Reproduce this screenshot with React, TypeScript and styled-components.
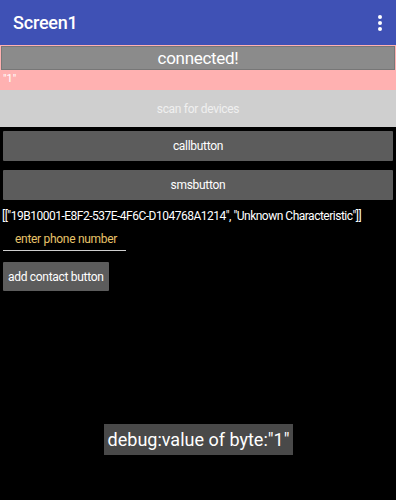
import React from 'react';
import styled, { createGlobalStyle } from 'styled-components';

const GlobalStyle = createGlobalStyle`
  html, body {
    margin: 0;
    padding: 0;
    background: #000;
  }
  body {
    font-family: Roboto, "Noto Sans", sans-serif;
  }
`;

const Screen = styled.div`
  width: 396px;
  height: 500px;
  background: #000;
  display: flex;
  flex-direction: column;
  overflow: hidden;
`;

const AppBar = styled.header`
  height: 45px;
  background: #3f51b5;
  display: flex;
  align-items: center;
  justify-content: space-between;
  padding: 0 14px 0 13px;
  box-sizing: border-box;
  flex-shrink: 0;
`;

const Title = styled.h1`
  margin: 0;
  font-size: 18px;
  font-weight: 500;
  letter-spacing: -0.2px;
  color: #fff;
`;

const MenuDots = styled.div`
  display: flex;
  flex-direction: column;
  gap: 2px;
  span {
    width: 4px;
    height: 4px;
    border-radius: 50%;
    background: #fff;
  }
`;

const StatusPanel = styled.div`
  background: #ffb1b1;
  padding-top: 1px;
  display: flex;
  flex-direction: column;
`;

const Connected = styled.div`
  margin: 0 1px;
  height: 22px;
  background: #8b8b8b;
  border: 1px solid #777;
  color: #fff;
  font-size: 17px;
  letter-spacing: -0.3px;
  line-height: 22px;
  text-align: center;
`;

const ByteText = styled.div`
  height: 20px;
  line-height: 18px;
  padding-left: 3px;
  color: #fff;
  font-size: 11px;
`;

const ScanButton = styled.div`
  height: 37px;
  background: #cfcfcf;
  color: #f0f0f0;
  font-size: 12px;
  letter-spacing: -0.3px;
  display: flex;
  align-items: center;
  justify-content: center;
`;

const Body = styled.div`
  display: flex;
  flex-direction: column;
  align-items: stretch;
  padding: 4px 3px 0;
  gap: 9px;
`;

const Button = styled.div<{ $wide?: boolean }>`
  height: ${p => (p.$wide ? '30px' : '29px')};
  align-self: ${p => (p.$wide ? 'stretch' : 'flex-start')};
  margin-top: ${p => (p.$wide ? '0' : '2px')};
  padding: 0 5px;
  background: #5c5c5c;
  color: #fff;
  font-size: 12px;
  letter-spacing: -0.3px;
  white-space: nowrap;
  border-radius: 1px;
  display: flex;
  align-items: center;
  justify-content: center;
`;

const InfoLine = styled.div`
  color: #fff;
  font-size: 12px;
  letter-spacing: -0.5px;
  margin-left: -1px;
  white-space: nowrap;
`;

const PhoneInput = styled.div`
  align-self: flex-start;
  width: 123px;
  border-bottom: 1px solid #cfcfcf;
  color: #e7c46a;
  font-size: 12px;
  letter-spacing: -0.3px;
  white-space: nowrap;
  padding: 0 0 4px 12px;
  box-sizing: border-box;
`;

const Spacer = styled.div`
  flex: 1;
`;

const DebugRow = styled.div`
  display: flex;
  justify-content: center;
  padding-bottom: 45px;
`;

const DebugLabel = styled.div`
  background: #494949;
  color: #fff;
  font-size: 18px;
  height: 31px;
  line-height: 31px;
  padding: 0 4px;
  margin-left: 1px;
`;

export default function App() {
  return (
    <Screen>
      <GlobalStyle />
      <AppBar>
        <Title>Screen1</Title>
        <MenuDots>
          <span />
          <span />
          <span />
        </MenuDots>
      </AppBar>
      <StatusPanel>
        <Connected>connected!</Connected>
        <ByteText>"1"</ByteText>
      </StatusPanel>
      <ScanButton>scan for devices</ScanButton>
      <Body>
        <Button $wide>callbutton</Button>
        <Button $wide>smsbutton</Button>
        <InfoLine>[["19B10001-E8F2-537E-4F6C-D104768A1214", "Unknown Characteristic"]]</InfoLine>
        <PhoneInput>enter phone number</PhoneInput>
        <Button>add contact button</Button>
      </Body>
      <Spacer />
      <DebugRow>
        <DebugLabel>debug:value of byte:"1"</DebugLabel>
      </DebugRow>
    </Screen>
  );
}
